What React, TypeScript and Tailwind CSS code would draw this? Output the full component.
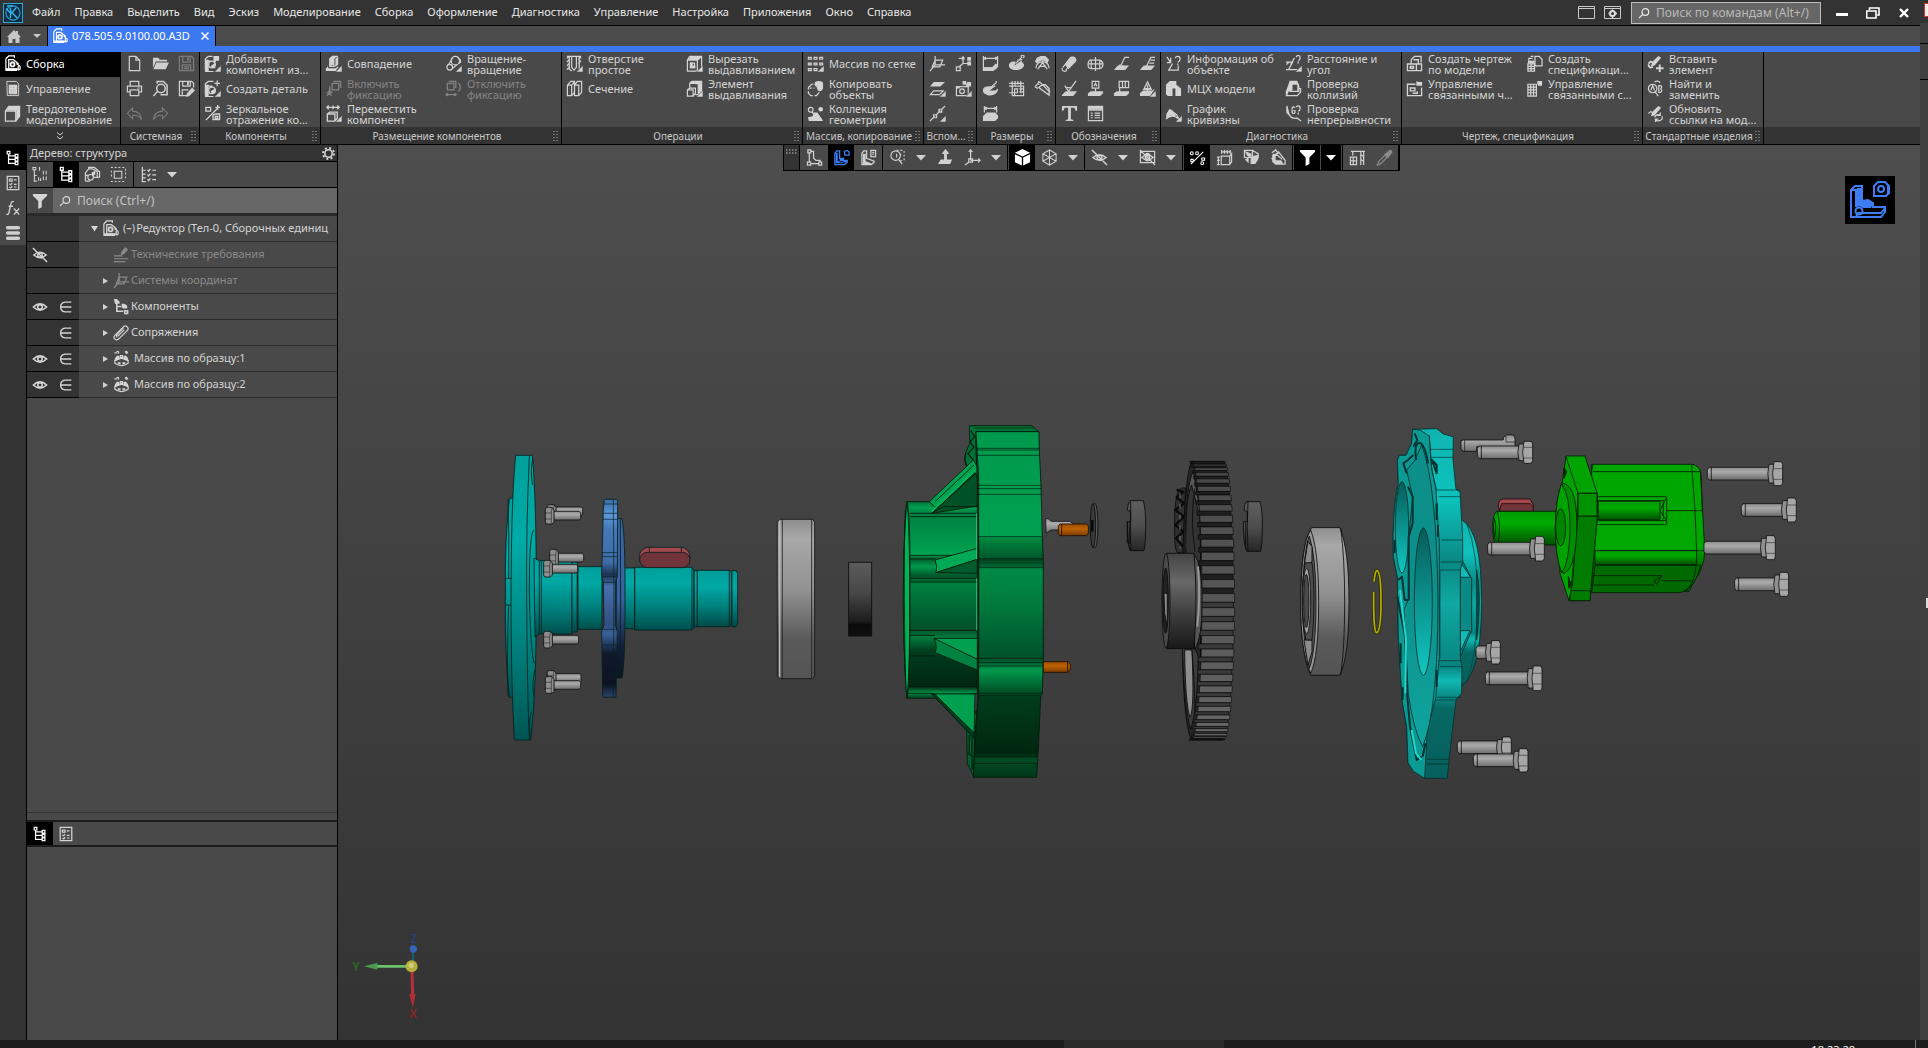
import React from "react";

type Glyph = { s?: string; f?: string; w?: number };

const tri = "M18 11V18H11Z";
const glyphs: Record<string, Glyph> = {
  assembly: { s: "M2 4L5 1H11V3M2 4V16H12M2 4V16M5 5H10L15 9V15H5ZM13 9L17 12V15L15 16", f: "M7 7H11V8H12V12H11V13H7V12H6V8H7ZM8 9V11H10V9ZM2 14H14V17H2Z" },
  sheet: { s: "M3 1.5H13L15.5 4V16.5H3.5ZM5 6.5H14M5 9.5H14M5 12.5H14M7.5 5V15M11 5V15", f: "M5 5H14V15H5Z M7 7V8H8V7ZM10 7V8H11V7ZM7 10V11H8V10ZM10 10V11H11V10ZM7 13V14H8V13ZM10 13V14H11V13Z", w: 1 },
  solid: { s: "M1.5 6.5H12.5V17H1.5ZM1.5 6.5L5 1.5H16.5V12L12.5 17M12.5 6.5L16.5 1.5", f: "M2 6L5 2H16L12.5 6.5V17H12L12 6ZM13 7L16.5 2.5V12L13 16.5Z" },
  doc: { s: "M3.5 1.5H10.5L14.5 5.5V16.5H3.5ZM10.5 1.5V5.5H14.5" },
  folder: { f: "M1 3H7L8 5H16V7H4L1 14ZM4.500 8H18L14.500 15H1.500Z" },
  save: { s: "M1.5 1.5H14.5L16.5 3.5V16.5H1.5ZM5 1.500V7.500H13V1.500M4.5 16.500V10.500H13.500V16.500M6 12.500H12M6 14.500H12", f: "M9.500 2.500H11.500V6H9.500Z" },
  print: { s: "M4.500 6V1.500H13.500V6M4 12.500H1.500V6.500H16.500V12.500H14M4.500 10.500H13.500V16.500H4.500Z", f: "M12 8H15V9H12Z" },
  preview: { s: "M5.500 4V1.500H12L16 5.500V15.500H9M14 9A4.500 4.500 0 1 1 5 9A4.500 4.500 0 1 1 14 9M6 12L1.500 17", w: 1.6 },
  saveEdit: { s: "M10 16.500H1.500V1.500H14.5L16.5 3.5V8M5 1.500V6.500H13V1.500M4.5 16V10.500H11", f: "M9.500 2H11.500V5.500H9.500ZM15 8L18 11L12 17L8.500 18L9.500 14Z" },
  undo: { s: "M7 3L1.500 9L7 14.500V11C12 10.500 14.500 12 16.500 15.500C16 10 13 7 7 6.500Z", w: 1.1 },
  redo: { s: "M11 3L16.500 9L11 14.500V11C6 10.500 3.500 12 1.500 15.500C2 10 5 7 11 6.500Z", w: 1.1 },
  addComp: { s: "M1.500 16V4L4.500 1.500H9M2 6.500H9M5 10A3.500 3.500 0 1 0 12 10A3.500 3.500 0 1 0 5 10", f: "M1 5H5V17H10V18H1ZM10 1H16V6H13L12 8H10ZM7 12L12 8V14H8Z" },
  newPart: { s: "M1.500 16V4L4.500 1.500H10M2 6.500H9M5 11A3.500 3.500 0 1 0 12 11A3.500 3.500 0 1 0 5 11M11 3.500H17M14 0.500V6.500", f: "M1 5H5V17H10V18H1ZM7 12L12 9V14H8Z" },
  mirror: { s: "M2 16L15 3M2 2.500H7V6.500H2ZM12 2.500H17M14.500 0V5M9.500 11L12 9.500H16.500V15.500H9.500ZM12 12H14.500V14H12Z", w: 1.4 },
  coincide: { s: "M5 12V4L8 1.500H13V10L10 12Z M3 12.500L1.500 15.500H11L14 12.500", f: "M8 1H13L10 4V11H5V4ZM1 14H12V17H1ZM11 4L14 2V10L11 12Z" },
  rotate: { s: "M6.500 6A4.500 4.500 0 1 1 15.500 6A4.500 4.500 0 1 1 6.500 6M2 13A3 3 0 1 1 8 13A3 3 0 1 1 2 13M4 10L8 3M8 14L13 10", f: "M13 2L17 5V8L14 10L15 6Z" },
  fixOn: { s: "M7.500 3.500H14.500V10.500H7.500ZM9 1.500H16.500V8.500M5 7V13M1.500 13.500H8.500M2 16.500L4.500 14L7 16.500M3 12H7" },
  fixOff: { s: "M2.500 3.500H9.500V10.500H2.500ZM4 1.500H11.500V8.500M14 3C17 6 17 10 14 12M3 14L1 15.500L3 17M10 14L12 15.500L10 17M2 15.500H11" },
  move: { s: "M2 2.500H15M4 0.500L2 2.500L4 4.500M13 0.500L15 2.500L13 4.500M8.500 0.500V4.500M2.500 9.500H10.500V17H2.500ZM2.500 9.500L5 7.500H13V14L10.500 17", w: 1.4 },
  hole: { s: "M6 1.500V13L8.500 16L11 13V1.500M3.500 1V15L6 17M14 1V15M1 3.500L4 1M1 7.500L4 4M1 11.500L4 8M1 15.500L4 12M13 5L16 2M13 9L16 6M1 1.500H16" },
  section: { s: "M1.500 5.500L5 1.500H9V13L6 16.500H1.500ZM9 5.500L12 1.500H16.500V13L13.500 16.500H9ZM1.500 5.500H6V16.500M6 5.500L9 2M9 5.500H13.500V16.500" },
  cut: { s: "M1.500 5.500H12V17H1.500ZM1.500 5.500L4 1.500H16.500V13M12 5.500L16 2M5 8.500H9V13.500H5Z", f: "M2 5L4.500 2H16L12.500 5.500ZM4 8H7V11H10V14H4Z" },
  extrude: { s: "M1.500 10.500H7.500V17H1.500ZM1.500 10.500L4 8.500H10V14L7.500 17M4 8.500V3.500L6 1.500H16.500V12L13 15.500H10M4 3.500H13V15", f: "M4 4L6 2H16L13 4.500ZM13 4L16.500 2V12L13 15Z" },
  grid: { s: "M1.500 2.500H4.500V4.500H1.500ZM7.500 2.500H10.500V4.500H7.500ZM13.500 2.500H16.500V4.500H13.500ZM1.500 8.500H4.500V10.500H1.500ZM7.500 8.500H10.500V10.500H7.500ZM13.500 8.500H16.500V10.500H13.500ZM1.500 14.500H4.500V16.500H1.500ZM7.500 14.500H10.500V16.500H7.500Z" },
  copyObj: { s: "M1.500 8L5 4.500H7M1.500 8V10M1.500 12V14L4 16.500H6M8 16.500H10L13 13M3 8.500H5M7 8.500H8", f: "M8 4A4.500 3 0 1 1 17 4V9C16 12 12 13 11 10L10 7C9 7 8 6 8 4Z" },
  collect: { s: "M1.500 5A2.500 2.500 0 1 1 6.500 5A2.500 2.500 0 1 1 1.500 5M5 7.500L9 11", f: "M12 4.500A2.500 2.500 0 1 1 17 4.500A2.500 2.500 0 1 1 12 4.500M7 8H11L16 15L17 17H2L1 13L6 12Z" },
  plane: { s: "M6.500 6V1M6.500 10.500L1 17M6.500 10.500H17M3.500 12.500L6.500 5.500H14.500L11.500 12.500ZM6.500 5.500V10.500" },
  axis: { s: "M8.500 1V9H17M8.500 9L4 13M1.500 12.500H5.500V16.500H1.500ZM7 3.500H4", f: "M7 2H10V5H7ZM13 2H17V6H13ZM13 7H17V11H13Z" },
  planes: { s: "M1.500 15.500L5 11.500H15L11 15.500Z", f: "M5 2H17L12 7H1Z" },
  body: { s: "M1.500 7H14V16.500H1.500ZM5 12A2.500 2.500 0 1 1 10 12A2.500 2.500 0 1 1 5 12", f: "M8 1H12V5H8ZM13 2H17V7H14L11 8ZM1 7H5V9H1Z" },
  line: { s: "M1 17L6 12M8 10L12 6M13 5L17 1M5 10.500H8V13.500H5ZM10.500 4.500H13.500V7.500H10.500Z" },
  dim1: { s: "M1.500 1V17M16.500 1V13M1.500 3.500H16.500M4 2L2 3.500L4 5M14 2L16 3.500L14 5M1.500 13.500H11L15 9.500", f: "M1 13H11L16 9V14L12 17H1Z" },
  dim2: { s: "M8 9L15 2M10 5.500L15 5M14 2A1.500 1.500 0 1 1 16 3", f: "M1 10C2 6 8 7 8 7L7 11L14 6L17 10C17 16 8 17 4 15C1 14 1 12 1 10Z" },
  dim3: { s: "M2 14A7 7 0 1 1 16 14M4 15L9 8L14 15M5 12H13", f: "M3 3L7 1H12L16 5L14 9L11 6H7L3 9L1 7Z" },
  dim4: { s: "M8 9L15 3V1M14 6L8 10", f: "M1 10C2 6 9 6 12 8L8 11H14L17 9C17 16 8 18 4 15C1 14 1 12 1 10Z" },
  dim5: { s: "M4.500 1V16M1 3.500H17M7.500 1V7M10.500 1V5M13.500 1V14M1 6.500H16.500V16.500H4M1 13.500H10V9.500H7V16M12 9.500H17M12 12.500H17" },
  dim6: { s: "M1 7L6 2M1 7L4 9M6 2L17 13M9 5H12L16 9V16L5 8ZM5 1V5", w: 1.4 },
  dim7: { s: "M2.500 1V8M15.500 1V8M2.500 3.500H15.500M5 2L3 3.500L5 5M13 2L15 3.500L13 5", f: "M1 16V12L5 8H14L17 11V14L14 17H1Z" },
  thread: { s: "M2 13L10 3M5 16L13 7M1.500 13.500A2.500 2.500 0 0 0 6 16", f: "M9 3C11 0 18 2 16 7L8 15L4 10ZM10 5L13 8ZM8 7L11 10Z" },
  center: { s: "M4.500 5.500H13.500V14.500H4.500ZM4.500 5C0 6 0 14 4.500 14.500M13.500 5.500C18 7 18 13 13.500 14.500M1 9.500H17M9 2V17" },
  leader: { s: "M17 2.500H12.500L8 12M7 10L8 13L11 11", f: "M1 16L5 11H17L13 16Z" },
  leader2: { s: "M17 2.500H12.500L8 12M12 5.500H17M11 8.500H16", f: "M1 16L5 11H17L13 16Z" },
  rough: { s: "M4 6L8 12L16 1M6 8H10", f: "M1 16L5 12H17L13 17H1Z" },
  datum: { s: "M5.500 1.500H12.500V8.500H5.500ZM9 8.500V13M7.500 6.500L9 3.500L10.500 6.500", f: "M1 17V14L4 12H17V14L14 17Z" },
  tol: { s: "M6.500 1.500H16.500V8H6.500ZM10 1.500V8M13 1.500V8M7 8V13", f: "M1 17V14L4 12H17V14L14 17Z" },
  brand: { s: "M9 2L13 10H5ZM9 5V14M6 9H12", f: "M1 17V14L4 11H14L17 9L12 17Z" },
  text: { f: "M1 1H17V6H15.500L14 3H10.500V15L13 16V17H5V16L7.500 15V3H4L2.500 6H1Z" },
  table: { s: "M1.500 1.500H16.500V16.500H1.500ZM1.500 5.500H16.500M4 8.500H6M8 8.500H14M4 11H6M8 11H14M4 13.500H6M8 13.500H14", f: "M2 2H16V5H2Z" },
  info: { s: "M2 2L6 8M6 3V8H2M8 9L4 16H14V11M11 3.500Q11 1.500 13.500 1.500T16 4T13.500 8M13.500 9V10.500" },
  mass: { f: "M1 5L5 1H12V5L17 9V17H11V9H8V17H3L1 15Z" },
  curve: { s: "M1 15C4 12 8 11 12 13L17 17M2 10V14M4 6V13M7 5V12M10 8V12M2 10L5 5L8 7L12 10L15 15", f: "M2 9L5 5L9 8L12 12L6 11L2 14Z" },
  dist: { s: "M1 15.500H13M1 7.500H8L4 15M6 10L10 3M1.500 10L5 7M12 2.500Q12 0.500 14 0.500T16 3T14 6M14 7V9" },
  collision: { s: "M5.500 1.500H12.500L14.500 6V12H5.500ZM1.500 12L5 9M1.500 12V16.500H13L16.500 13V9H14", f: "M5 1H12L15 6V12H13V5H8V11L4 12L2 17L1 12Z" },
  cont: { s: "M2 1L4 9Q6 15 13 14L17 17M2 1V8L6 12M10.500 3Q9 1 7.500 3V8Q9 10 10.500 8V6H9M12 2.500Q12 1 14 1T16 3.500T14 6.500M14 8V10" },
  drawing: { s: "M5.500 5L9 1.500H16V8M5.500 5V9M8 5H13V9M1.500 9.500H16.500V16.500H1.500ZM4.500 12H8V14H4.500ZM11 9.500V16", w: 1.4 },
  drawings: { s: "M10 4.500H1.500V16.500H16.500V8M4.500 8.500H9.500V11.500H4.500ZM12 12V14H7", f: "M11 1L13 2H17V6H11Z", w: 1.4 },
  spec: { s: "M2 9.500H9V17H2ZM2 12H9M2 14.500H9M5.500 9.500V17M3 6V3.500H7M5 1.500H8M9.500 1.500H14L17 4.500V11.500H9.500Z", f: "M2 6H9V9H2Z" },
  specs: { s: "M2 4.500H11V17H2ZM2 7.500H11M2 10.500H11M2 13.500H11M5 5V17M8 5V17", f: "M12 1H17V6H13L12 4Z" },
  insert: { s: "M1.500 9L4 7L8 9M13.500 10V18M9.500 14H17.500M2 10A2 2 0 1 0 6 12", f: "M6 7L12 1L15 3L8 11L4 12Z", w: 2 },
  replace: { s: "M1.500 9A4.500 4.500 0 1 1 10.500 9A4.500 4.500 0 1 1 1.500 9M9 13L12 17M4 11L6 6L8 11M12.500 6V13H14.500Q17 11 14.500 9.500Q16.500 7 14.500 6ZM8 2Q12 0 14 3" },
  refresh: { s: "M1.500 9L4 7L8 9M8 13Q10 9 14 11M16 12V15Q13 18 9 16M14 8V11H11M9 18V15H12", f: "M6 7L12 1L15 3L8 11L4 12Z" },
  tree: { s: "M2.500 1.500H5.500V4.500H2.500ZM4 4.500V15H11M4 6.500H11M4 10.500H11M11.500 5H14.500V8H11.500ZM11.500 9.500H14.500V12.500H11.500ZM11.500 13.500H14.500V16.500H11.500Z", w: 1.4 },
  params: { s: "M2.500 1.500H15.500V16.500H2.500ZM5 4.500H8V7H5ZM10 5.500H13M5 10L6.500 11L8 9M10 10.500H13M5 13.500L6.500 14.500L8 12.500M10 13.500H13", w: 1.4 },
  fx: { s: "M10 2Q7.500 0.500 6.500 5L4.500 14Q4 17 1.500 16M4 7H9M10 9.500L16 16.500M16 9.500L10 16.500", w: 1.5 },
  layers: { f: "M3 1H15Q17 1 17 3T15 5H3Q1 5 1 3T3 1ZM3 7H15Q17 7 17 9T15 11H3Q1 11 1 9T3 7ZM3 13H15Q17 13 17 15T15 17H3Q1 17 1 15T3 13Z" },
  numTree: { s: "M1 1.500H4V4H1ZM2.500 4V16H5M2.500 10H5M8 1V5M12 5V9M15 5V9M7 12V16M12 11V15M15 11V15M9 13V16", w: 1.1 },
  parts: { s: "M1.500 16V7L5 3H9L14 6V12M5 3V1.500H11L16.500 6V12M4 12A3 3 0 1 1 10 12A3 3 0 1 1 4 12M1.500 10H4M1.500 16H6M10 12H16.500", f: "M8 7L12 5V9L9 11Z" },
  area: { s: "M1 1.500H3M5 1.500H7M9 1.500H11M13 1.500H15M1 16.500H3M5 16.500H7M9 16.500H11M13 16.500H15M16.500 3V5M16.500 7V9M16.500 11V13M4.500 5.500H12.500V13H4.500ZM1.500 5V7M1.500 9V11", w: 1.1 },
  checks: { s: "M2.500 1V16.500H6M2.500 4.500H6M2.500 8.500H6M2.500 12.500H6M8 4L9 5.500L11 3M8 9L9 10.500L11 8M8 14L9 15.500L11 13M13 4.500H17M13 9.500H17M13 14.500H17" },
  funnel: { f: "M1 1H17V3L11 9V16L7 18V9L1 3Z" },
  search: { s: "M6 7.500A5 5 0 1 1 16 7.500A5 5 0 1 1 6 7.500M7 11L1.500 16.500", w: 1.8 },
  eye: { s: "M1.500 9Q9 2 16.500 9Q9 16 1.500 9ZM6.500 9A2.500 2.500 0 1 1 11.500 9A2.500 2.500 0 1 1 6.500 9", w: 1.8 },
  eyeOff: { s: "M2 9Q9 3 16 9Q9 15 2 9ZM6.500 9A2.500 2.500 0 1 1 11.500 9A2.500 2.500 0 1 1 6.500 9M1 1L17 17", w: 1.6 },
  elem: { s: "M15 3.500H8Q3 4 3 9T8 14.500H15M3 9H15", w: 1.6 },
  req: { s: "M1 10.500H10M1 13.500H16M1 16.500H13M9 8L14 3", f: "M13 1L16 4L11 9L8 9.500L9 6Z" },
  comps: { s: "M4 5V14H11M4 9H9M12.500 13.500H15.500V16.500H12.500Z", f: "M1 1H4L7 4V6H2ZM9 6H12L15 8V11H10Z", w: 1.6 },
  clip: { s: "M2 12L11 3Q13 1 15 3T15 7L7 15Q4 18 2 16T2 12M5 13L12 6M4 14Q3 12 5 10L11 4" },
  pattern: { s: "M2 11Q9 7 16 11V14Q9 19 2 14ZM4 2.500A1 1 0 1 1 5 3.500M13 2.500A1 1 0 1 1 14 3.500M1.500 3H4M13 3H16M8 6H10V8H8Z", f: "M4 6H7V10L2 12V9ZM11 6H14L16 9V12L11 10ZM5 13H8V15H5ZM10 13H13V15H10Z" },
  sketch: { s: "M3.500 4V14M5 2.500H8V9.500L10.500 12H15V14M5 15.500H13.500M2 1H5V4H2ZM1.500 14H5V17H1.500ZM13.500 14H16.500V17H13.500Z" },
  partView: { s: "M2 4.500L4 2H7V10H11V12H15V14L12 16.500H2ZM12 2.500L15 1.500L17 3V6.500H12.500Z", f: "M3 4H5V13H11V15H3ZM7 10H10L12 12H15V14H7Z", w: 1.4 },
  docView: { s: "M2 4.500L4 2H7V10L15 13V14L12 16.500H2ZM11.500 1.500H16.500V8H11.500ZM13 3.500H15M13 5.500H15", f: "M3 5H6V13L12 15V16H3Z" },
  zoomArea: { s: "M2 7A5 5 0 1 1 12 7A5 5 0 1 1 2 7M10 11L14 16M8 1.500H10M12 1.500H14M16 2V4M16 6V8M16 10V12M12 12.500H14M8 5V9M11 6H13", w: 1.2 },
  normal: { s: "M9 3V12M6 5L9 2L12 5", f: "M9 0L13 5H10.500V11H16L14 16H1L4 11H7.500V5H5Z" },
  orient: { s: "M7 1V12M5 3L7 1L9 3M7 12H17M15 10L17 12L15 14M5 14L1 17M5 10.500H9V14H5Z" },
  shade: { f: "M9 0L17 4L9 8L1 4ZM1 5.500L8.300 9V17.500L1 14ZM17 5.500L9.700 9V17.500L17 14Z" },
  wire: { s: "M9 1L16 5V13L9 17L2 13V5ZM2 5L9 9L16 5M9 9V17M9 1V9L2 13M9 9L16 13", w: 1.1 },
  camEye: { s: "M1.500 2.500H16.500V14.500H1.500ZM3 9Q9 3 15 9Q9 14 3 9ZM1 1L17 17", f: "M6 7A3 3 0 0 1 12 7V10A3 3 0 0 1 6 10ZM8 8V10H10V8Z" },
  constraint: { s: "M2 16L15 3M1.500 4.500A1.500 1.500 0 1 1 4.500 4.500A1.500 1.500 0 1 1 1.500 4.500M7 4.500A1.500 1.500 0 1 1 10 4.500A1.500 1.500 0 1 1 7 4.500M13.500 9.500H16.500V12H13.500ZM12.500 15A1.500 1.500 0 1 1 15.500 15A1.500 1.500 0 1 1 12.500 15M2 11H4.500V13.500H2Z", w: 1.1 },
  dimBox: { s: "M5.500 7.500H14.500V16.500H5.500ZM6 1V5M9 1V5M12 1V5M15 1V5M6 3H16M1 8.500H4M1 12H4M1 16.500H4M2.500 8V17M14.500 7.500L16.500 5V14L14.500 16" },
  boxCut: { s: "M1.500 1.500H10V9H1.500ZM10 1.500L16 5V10", f: "M2 2L9 5V10L4 7ZM8 8L16 6V11L13 16H8ZM2 11L6 9V15Z" },
  hatch: { s: "M2 4L6 1L9 5M6 5L13 11M9 3L16 12V16H6L2 10ZM3 6V14", f: "M3 5H6V12H12L14 16H5L3 14Z" },
  crane: { s: "M2 2.500H17M4 2V7M12.500 3V17M15.500 3V17M12.500 6L15.500 8M12.500 11L15.500 13M1.500 8.500H8V16.500H1.500ZM1.500 12.500H8M4.500 8.500V16.500" },
  dropper: { s: "M10 6L3 13L1.500 17L5 15.500L12 8.500", f: "M9 5L11 4L14 1Q17 0 17.500 3.500L14 8L13 10L9 7Z" },
};

function Icon({ n, fly, className = "size-[17px]" }: { n: string; fly?: boolean; className?: string }) {
  const g = glyphs[n];
  return (
    <svg viewBox="0 0 18 18" className={`${className} shrink-0`} aria-hidden="true">
      {g.f && <path d={g.f} fill="currentColor" fillRule="evenodd" />}
      {g.s && <path d={g.s} fill="none" stroke="currentColor" strokeWidth={g.w ?? 1.3} />}
      {fly && <path d={tri} fill="currentColor" stroke="#494949" strokeWidth="0.6" />}
    </svg>
  );
}

const Caret = () => (
  <svg viewBox="0 0 10 6" className="h-1.5 w-2.5 shrink-0" aria-hidden="true">
    <path d="M0 0H10L5 5.500Z" fill="currentColor" />
  </svg>
);

const Gear = ({ className }: { className: string }) => (
  <svg viewBox="0 0 14 14" className={className} aria-hidden="true">
    <circle cx="7" cy="7" r="4" fill="none" stroke="currentColor" strokeWidth="1.800" />
    <circle cx="7" cy="7" r="6" fill="none" stroke="currentColor" strokeWidth="2" strokeDasharray="2.200 2.512" />
  </svg>
);

type Tool = { n: string; t: string[]; fly?: boolean; off?: boolean };

function Caption({ lines }: { lines: string[] }) {
  return (
    <span className="whitespace-nowrap text-[11px] leading-[11px]">
      {lines.map((l) => (
        <span key={l} className="block">{l}</span>
      ))}
    </span>
  );
}

function ToolButton({ n, t, fly, off }: Tool) {
  return (
    <button disabled={off} className={`flex min-w-0 items-center gap-[5px] pb-0.5 pl-1 text-left ${off ? "text-[#858585]" : "text-[#d4d4d4]"}`}>
      <Icon n={n} fly={fly} />
      <Caption lines={t} />
    </button>
  );
}

function Section({ label, width, children }: { label: string; width: string; children: React.ReactNode }) {
  return (
    <section className={`flex shrink-0 flex-col border-r border-black ${width}`}>
      {children}
      <div className="flex h-[17px] items-center bg-[#333] pr-[3px]">
        <h2 className="min-w-0 grow whitespace-nowrap text-center text-[10px] leading-4 text-[#c8c8c8]">{label}</h2>
        <svg viewBox="0 0 5 10" className="h-2.5 w-[5px] shrink-0 text-[#b0b0b0]" aria-hidden="true">
          <path d="M1 0V10M4 0V10" stroke="currentColor" strokeWidth="1" strokeDasharray="1 2" />
        </svg>
      </div>
    </section>
  );
}

function TextTools({ items, cols }: { items: Tool[]; cols: string }) {
  return <div className={`grid h-[75px] grid-rows-3 ${cols}`}>{items.map((i) => <ToolButton key={i.t.join()} {...i} />)}</div>;
}

function IconTools({ items, cols, dim = [], fly = [] }: { items: string[]; cols: string; dim?: string[]; fly?: string[] }) {
  return (
    <div className={`grid h-[75px] grid-rows-3 ${cols}`}>
      {items.map((n) => (
        <button key={n} aria-label={n} className={`flex items-center justify-center pb-0.5 ${dim.includes(n) ? "text-[#7c7c7c]" : "text-[#cfcfcf]"}`}>
          <Icon n={n} fly={fly.includes(n)} />
        </button>
      ))}
    </div>
  );
}

const menu = ["Файл", "Правка", "Выделить", "Вид", "Эскиз", "Моделирование", "Сборка", "Оформление", "Диагностика", "Управление", "Настройка", "Приложения", "Окно", "Справка"];

function TitleBar() {
  return (
    <header className="flex h-[26px] items-center border-b border-black bg-[#333] pl-[3px] text-[#e8e8e8]">
      <svg viewBox="0 0 20 20" className="size-5 shrink-0" aria-hidden="true">
        <rect x="0.500" y="0.500" width="19" height="19" fill="#0d2c3d" stroke="#2ba5dc" />
        <circle cx="10" cy="10" r="7" fill="none" stroke="#2493c8" strokeWidth="1.300" />
        <path d="M7.500 5V15M8 10.500L13 5M9 9.500L14 15M3 5.500L7 9.500M4 3L10 3" fill="none" stroke="#35b3ea" strokeWidth="1.500" />
      </svg>
      <nav className="ml-[9px] flex gap-3.5 text-[11px]">
        {menu.map((m) => (
          <button key={m} className="whitespace-nowrap">{m}</button>
        ))}
      </nav>
      <div className="ml-auto flex items-center pr-[11px]">
        <button aria-label="Окно"><svg viewBox="0 0 17 13" className="h-[13px] w-[17px]"><path d="M.5 .5H16.500V12.500H.5ZM1 2.500H16" fill="none" stroke="#c9c9c9" /></svg></button>
        <button aria-label="Настройка экрана" className="ml-[9px]">
          <svg viewBox="0 0 17 13" className="h-[13px] w-[17px]"><path d="M.5 .5H16.500V12.500H.5ZM1 2.500H16" fill="none" stroke="#c9c9c9" /><circle cx="8.500" cy="7.500" r="2.500" fill="none" stroke="#ddd" strokeWidth="2" /><path d="M8.500 3.500V5M8.500 10V12M4.500 7.500H6M11 7.500H13" stroke="#ddd" strokeWidth="1.500" /></svg>
        </button>
        <label className="ml-2.5 flex h-[22px] w-[190px] items-center gap-1.5 border border-[#bdbdbd] bg-[#666] pl-1.5">
          <Icon n="search" className="size-3" />
          <input aria-label="Поиск по командам" placeholder="Поиск по командам (Alt+/)" className="w-full min-w-0 bg-transparent text-xs text-white outline-none placeholder:text-[#bababa]" />
        </label>
        <button aria-label="Свернуть" className="ml-[15px] mt-1 h-[3px] w-3 bg-white" />
        <button aria-label="Восстановить" className="ml-[18px]"><svg viewBox="0 0 14 12" className="h-3 w-3.5"><path d="M3.500 3V1H13V8H11M.7 4H10V11H.7Z" fill="none" stroke="#fff" strokeWidth="1.600" /></svg></button>
        <button aria-label="Закрыть" className="ml-[19px]"><svg viewBox="0 0 10 10" className="size-2.5"><path d="M1 1L9 9M9 1L1 9" stroke="#fff" strokeWidth="2.400" /></svg></button>
      </div>
    </header>
  );
}

function TabRow() {
  return (
    <div>
      <div className="flex h-5 bg-[#4b4b4b]">
        <button aria-label="Главная" className="flex w-12 items-center justify-between border-x border-black px-1.5 text-[#c8c8c8]">
          <svg viewBox="0 0 14 13" className="h-[13px] w-3.5"><path d="M7 0L9 2V1H11V4L14 7H12.500V13H8.500V9H5.500V13H1.500V7H0Z" fill="currentColor" /></svg>
          <svg viewBox="0 0 8 4" className="h-1 w-2"><path d="M0 0H8L4 4Z" fill="currentColor" /></svg>
        </button>
        <div className="flex w-[168px] items-center border-r border-black bg-[#3c78f0] pl-1 text-white">
          <Icon n="assembly" className="size-4" />
          <button className="ml-1 text-[11px]">078.505.9.0100.00.A3D</button>
          <button aria-label="Закрыть вкладку" className="ml-auto mr-1.5"><svg viewBox="0 0 8 8" className="size-2"><path d="M.5 .5L7.500 7.500M7.500 .5L.5 7.500" stroke="#fff" strokeWidth="1.500" /></svg></button>
        </div>
      </div>
      <div className="h-1.5 bg-[#3c78f0]" />
    </div>
  );
}

const modes = [
  { n: "assembly", t: ["Сборка"] },
  { n: "sheet", t: ["Управление"] },
  { n: "solid", t: ["Твердотельное", "моделирование"] },
];

function Ribbon() {
  return (
    <div className="flex border-b border-black bg-[#494949]">
      <div className="flex w-[121px] shrink-0 flex-col border-r border-black">
        <div className="grid h-[75px] grid-rows-3">
          {modes.map(({ n, t }, i) => (
            <button key={n} className={`flex items-center gap-[5px] pb-0.5 pl-1 text-left ${i === 0 ? "bg-black text-white" : "text-[#d4d4d4]"}`}>
              <Icon n={n} />
              <Caption lines={t} />
            </button>
          ))}
        </div>
        <button aria-label="Ещё" className="flex h-[17px] items-center justify-center bg-[#333] text-[#d4d4d4]">
          <svg viewBox="0 0 8 8" className="size-2"><path d="M1 .5L4 3L7 .5M1 4.500L4 7L7 4.500" fill="none" stroke="currentColor" /></svg>
        </button>
      </div>
      <Section label="Системная" width="w-[79px]">
        <IconTools cols="grid-cols-3" items={["doc", "folder", "save", "print", "preview", "saveEdit", "undo", "redo"]} dim={["save", "undo", "redo"]} />
      </Section>
      <Section label="Компоненты" width="w-[121px]">
        <TextTools cols="grid-cols-1" items={[
          { n: "addComp", t: ["Добавить", "компонент из..."], fly: true },
          { n: "newPart", t: ["Создать деталь"], fly: true },
          { n: "mirror", t: ["Зеркальное", "отражение ко..."] },
        ]} />
      </Section>
      <Section label="Размещение компонентов" width="w-[241px]">
        <TextTools cols="grid-cols-2" items={[
          { n: "coincide", t: ["Совпадение"], fly: true },
          { n: "rotate", t: ["Вращение-", "вращение"], fly: true },
          { n: "fixOn", t: ["Включить", "фиксацию"], off: true },
          { n: "fixOff", t: ["Отключить", "фиксацию"], off: true },
          { n: "move", t: ["Переместить", "компонент"], fly: true },
        ]} />
      </Section>
      <Section label="Операции" width="w-[241px]">
        <TextTools cols="grid-cols-2" items={[
          { n: "hole", t: ["Отверстие", "простое"], fly: true },
          { n: "cut", t: ["Вырезать", "выдавливанием"], fly: true },
          { n: "section", t: ["Сечение"] },
          { n: "extrude", t: ["Элемент", "выдавливания"], fly: true },
        ]} />
      </Section>
      <Section label="Массив, копирование" width="w-[121px]">
        <TextTools cols="grid-cols-1" items={[
          { n: "grid", t: ["Массив по сетке"], fly: true },
          { n: "copyObj", t: ["Копировать", "объекты"] },
          { n: "collect", t: ["Коллекция", "геометрии"] },
        ]} />
      </Section>
      <Section label="Вспом..." width="w-[53px]">
        <IconTools cols="grid-cols-2" items={["plane", "axis", "planes", "body", "line"]} fly={["planes", "body", "line"]} />
      </Section>
      <Section label="Размеры" width="w-[79px]">
        <IconTools cols="grid-cols-3" items={["dim1", "dim2", "dim3", "dim4", "dim5", "dim6", "dim7"]} />
      </Section>
      <Section label="Обозначения" width="w-[105px]">
        <IconTools cols="grid-cols-4" items={["thread", "center", "leader", "leader2", "rough", "datum", "tol", "brand", "text", "table"]} fly={["brand"]} />
      </Section>
      <Section label="Диагностика" width="w-[241px]">
        <TextTools cols="grid-cols-2" items={[
          { n: "info", t: ["Информация об", "объекте"] },
          { n: "dist", t: ["Расстояние и", "угол"], fly: true },
          { n: "mass", t: ["МЦХ модели"] },
          { n: "collision", t: ["Проверка", "коллизий"] },
          { n: "curve", t: ["График", "кривизны"], fly: true },
          { n: "cont", t: ["Проверка", "непрерывности"] },
        ]} />
      </Section>
      <Section label="Чертеж, спецификация" width="w-[241px]">
        <TextTools cols="grid-cols-2" items={[
          { n: "drawing", t: ["Создать чертеж", "по модели"] },
          { n: "spec", t: ["Создать", "спецификаци..."] },
          { n: "drawings", t: ["Управление", "связанными ч..."] },
          { n: "specs", t: ["Управление", "связанными с..."] },
        ]} />
      </Section>
      <Section label="Стандартные изделия" width="w-[121px]">
        <TextTools cols="grid-cols-1" items={[
          { n: "insert", t: ["Вставить", "элемент"] },
          { n: "replace", t: ["Найти и", "заменить"] },
          { n: "refresh", t: ["Обновить", "ссылки на мод..."] },
        ]} />
      </Section>
      <div className="flex grow flex-col justify-end"><div className="h-[17px] bg-[#333]" /></div>
    </div>
  );
}

function SideStrip() {
  return (
    <div className="w-[26px] shrink-0 bg-[#333]">
      {["tree", "params", "fx", "layers"].map((n, i) => (
        <button key={n} aria-label={n} className={`flex h-[25px] w-[26px] items-center justify-center ${i === 0 ? "bg-black text-white" : "bg-[#494949] text-[#d0d0d0]"}`}>
          <Icon n={n} className="size-4" />
        </button>
      ))}
    </div>
  );
}

const rows = [
  { n: "req", t: "Технические требования", vis: "eyeOff", arrow: false, dim: true },
  { n: "plane", t: "Системы координат", arrow: true, dim: true },
  { n: "comps", t: "Компоненты", vis: "eye", el: true, arrow: true },
  { n: "clip", t: "Сопряжения", el: true, arrow: true },
  { n: "pattern", t: "Массив по образцу:1", vis: "eye", el: true, arrow: true, wide: true },
  { n: "pattern", t: "Массив по образцу:2", vis: "eye", el: true, arrow: true, wide: true },
];

function TreePanel() {
  return (
    <aside className="flex w-[312px] shrink-0 flex-col border-x border-black bg-[#494949] text-[#d4d4d4]">
      <div className="flex h-[17px] items-center justify-between border-b border-black bg-[#333] pl-[3px] pr-0.5 text-[11px] leading-4">
        <h2>Дерево: структура</h2>
        <button aria-label="Настройки"><Gear className="size-[13px]" /></button>
      </div>
      <div className="flex h-[26px] items-stretch border-b border-black">
        {["numTree", "tree", "parts", "area"].map((n, i) => (
          <button key={n} aria-label={n} className={`flex w-[26px] items-center justify-center ${i === 1 ? "bg-black text-white" : ""}`}><Icon n={n} className="size-[17px]" /></button>
        ))}
        <div className="ml-0.5 w-px bg-black" />
        <button aria-label="Список" className="flex items-center gap-2.5 pl-1.5"><Icon n="checks" className="size-[17px]" /><Caret /></button>
      </div>
      <div className="flex h-7 border-b-[3px] border-[#2a2a2a]">
        <button aria-label="Фильтр" className="flex w-[26px] items-center justify-center"><Icon n="funnel" className="size-4" /></button>
        <label className="flex grow items-center gap-1.5 bg-[#676767] pl-1.5">
          <Icon n="search" className="size-3" />
          <input aria-label="Поиск" placeholder="Поиск (Ctrl+/)" className="w-full min-w-0 bg-transparent text-xs outline-none placeholder:text-[#c2c2c2]" />
        </label>
      </div>
      <ul className="grow text-[11px]">
        <li className="flex h-[26px] items-stretch overflow-hidden">
          <span className="w-[52px] shrink-0 border-b border-black bg-[#333]" />
          <span className="flex grow items-center whitespace-nowrap border-b border-[#2c2c2c] pl-3">
            <svg viewBox="0 0 7 7" className="size-[7px] shrink-0"><path d="M0 1H7L3.500 6.500Z" fill="currentColor" /></svg>
            <span className="ml-1 flex"><Icon n="assembly" className="size-[17px]" /></span>
            <span className="ml-1 mr-px">(<b>–</b>)</span>
            <span>Редуктор (Тел-0, Сборочных единиц</span>
          </span>
        </li>
        {rows.map((r) => (
          <li key={r.t} className="flex h-[26px] items-stretch">
            <span className="flex w-[52px] shrink-0 items-center border-b border-black bg-[#333]">
              <span className="flex w-[26px] justify-center">{r.vis && <Icon n={r.vis} className="size-4" />}</span>
              <span className="flex w-[26px] justify-center">{r.el && <Icon n="elem" className="size-4" />}</span>
            </span>
            <span className={`flex grow items-center whitespace-nowrap border-b border-[#2c2c2c] pl-[23px] ${r.dim ? "text-[#8a8a8a]" : ""}`}>
              <svg viewBox="0 0 6 6" className="size-1.5 shrink-0 text-[#d0d0d0]">{r.arrow && <path d="M1 0L6 3L1 6Z" fill="currentColor" />}</svg>
              <span className="ml-[5px] flex"><Icon n={r.n} /></span>
              <span className={r.wide ? "ml-1" : "ml-px"}>{r.t}</span>
            </span>
          </li>
        ))}
      </ul>
      <div className="mb-[7px] h-px bg-[#333]" />
      <div className="flex h-[27px] items-start border-b-2 border-t-2 border-[#1c1c1c]">
        {["tree", "params"].map((n, i) => (
          <button key={n} aria-label={n} className={`flex h-[23px] w-[26px] items-center justify-center ${i === 0 ? "bg-black text-white" : ""}`}><Icon n={n} className="size-4" /></button>
        ))}
      </div>
      <div className="h-[193px] shrink-0" />
    </aside>
  );
}

const groups: { n: string; on?: string }[][] = [
  [{ n: "sketch" }, { n: "partView", on: "text-[#3f7df5] bg-black" }, { n: "docView" }],
  [{ n: "zoomArea" }, { n: "v" }, { n: "normal" }, { n: "orient" }, { n: "v" }],
  [{ n: "shade", on: "bg-black text-white" }, { n: "wire" }, { n: "v" }],
  [{ n: "eyeOff" }, { n: "v" }, { n: "camEye" }, { n: "v" }],
  [{ n: "constraint", on: "bg-black text-white" }, { n: "dimBox" }, { n: "boxCut" }, { n: "hatch" }],
  [{ n: "funnel", on: "bg-black text-white" }, { n: "v", on: "bg-black text-white" }],
  [{ n: "crane" }, { n: "dropper", on: "text-[#8a8a8a]" }],
];

function ViewToolbar() {
  return (
    <div className="relative ml-[445px] flex h-[26px] w-max border-x border-b border-black bg-[#494949] text-[#d0d0d0]">
      <div className="w-4 border-r border-black bg-[#333] px-0.5 pt-1">
        <svg viewBox="0 0 12 6" className="h-1.5 w-3"><path d="M0 1H12M0 4H12" stroke="#bbb" strokeDasharray="1.500 1.500" /></svg>
      </div>
      {groups.map((g, i) => (
        <div key={i} className="ml-px flex gap-px border-r border-black pr-px">
          {g.map((b, j) =>
            b.n === "v" ? (
              <button key={j} aria-label="Список" className={`flex w-5 items-center justify-center ${b.on ?? ""}`}><Caret /></button>
            ) : (
              <button key={j} aria-label={b.n} className={`flex w-[26px] items-center justify-center ${b.on ?? ""}`}><Icon n={b.n} /></button>
            )
          )}
        </div>
      ))}
    </div>
  );
}

/* Hex bolt with its head on the right: shank starts at x, head occupies [head, head + 36]. */
function BoltR({ x, y, head, h = 74, end = true }: { x: number; y: number; head: number; h?: number; end?: boolean }) {
  return (
    <g stroke="#111" strokeWidth="2.500" strokeLinejoin="round">
      <path d={`M${x + 5} ${y - 19}H${head}V${y + 19}H${x + 5}L${x} ${y + 12}V${y - 12}Z`} fill="url(#steel)" />
      {end && <path d={`M${x + 12} ${y - 19}V${y + 19}`} />}
      <path d={`M${head - 5} ${y - h / 2 + 8}Q${head - 12} ${y} ${head - 5} ${y + h / 2 - 8}H${head + 10}V${y - h / 2 + 8}Z`} fill="#909090" />
      <path d={`M${head + 10} ${y - h / 2}H${head + 32}L${head + 36} ${y - h / 2 + 8}V${y + h / 2 - 8}L${head + 32} ${y + h / 2}H${head + 10}Q${head + 2} ${y} ${head + 10} ${y - h / 2}Z`} fill="#a6a6a6" />
      <path d={`M${head + 8} ${y - 15}H${head + 35}M${head + 8} ${y + 17}H${head + 35}`} fill="none" strokeWidth="1.500" />
    </g>
  );
}

/* Hex bolt with its head on the left. */
function BoltL({ x, y, len, h = 50 }: { x: number; y: number; len: number; h?: number }) {
  return (
    <g stroke="#111" strokeWidth="2.500" strokeLinejoin="round">
      <path d={`M${x + 25} ${y - 13}H${x + len - 4}L${x + len} ${y - 8}V${y + 8}L${x + len - 4} ${y + 13}H${x + 25}Z`} fill="url(#steel)" />
      <path d={`M${x} ${y - h / 2 + 6}L${x + 3} ${y - h / 2}H${x + 20}L${x + 26} ${y - h / 2 + 8}V${y + h / 2 - 6}L${x + 20} ${y + h / 2}H${x + 3}L${x} ${y + h / 2 - 6}Z`} fill="#8e8e8e" />
      <path d={`M${x} ${y - 8}H${x + 18}L${x + 20} ${y - h / 2}M${x + 18} ${y - 8}V${y + h / 2}M${x} ${y + 10}H${x + 18}`} fill="none" strokeWidth="1.500" />
    </g>
  );
}

function Gradient({ id, stops }: { id: string; stops: [number, string][] }) {
  return (
    <linearGradient id={id} x1="0" y1="0" x2="0" y2="1">
      {stops.map(([o, c]) => <stop key={o} offset={o} stopColor={c} />)}
    </linearGradient>
  );
}

const teeth = Array.from({ length: 31 }, (_, i) => {
  const a = (t: number) => -Math.PI / 2 + (Math.PI * t) / 31;
  const edge = (t: number) => ({ y: 572 + 418 * Math.sin(a(t)), l: 966 - 32 * (1 - Math.cos(a(t))), r: 1064 - 32 * (1 - Math.cos(a(t))) });
  return { p: edge(i), q: edge(i + 0.62), n: edge(i + 1), lit: 66 + Math.round(42 * (i / 31)) };
});

function Model() {
  return (
    <svg viewBox="338 145 1582 895" className="absolute inset-0 h-full w-full" role="img" aria-label="Редуктор">
      <defs>
        <Gradient id="steel" stops={[[0, "#8c8c8c"], [0.35, "#ababab"], [1, "#6c6c6c"]]} />
        <Gradient id="teal" stops={[[0, "#00a09c"], [0.3, "#00aaa6"], [0.6, "#008985"], [1, "#005553"]]} />
        <Gradient id="shaft" stops={[[0, "#009c98"], [0.3, "#00a8a4"], [0.65, "#007f7b"], [1, "#004a48"]]} />
        <Gradient id="blue" stops={[[0, "#3c6eaa"], [0.08, "#5c98d8"], [0.15, "#4478b4"], [0.32, "#3e6ca8"], [0.38, "#1d3350"], [0.44, "#4770ae"], [0.63, "#334e80"], [0.68, "#3a6098"], [0.78, "#10192c"], [0.93, "#0d1322"], [1, "#28446a"]]} />
        <Gradient id="blue2" stops={[[0, "#3a66a2"], [0.5, "#3a62a0"], [0.8, "#141f38"], [1, "#0d1322"]]} />
        <Gradient id="ring" stops={[[0, "#8e8e8e"], [0.12, "#a8a8a8"], [0.45, "#919191"], [0.75, "#5a5a5a"], [1, "#545454"]]} />
        <Gradient id="dark" stops={[[0, "#5c5c5c"], [0.4, "#484848"], [0.8, "#1c1c1c"], [0.85, "#0b0b0b"], [1, "#101010"]]} />
        <Gradient id="washer" stops={[[0, "#5e5e5e"], [0.5, "#4e4e4e"], [1, "#262626"]]} />
        <Gradient id="g1" stops={[[0, "#009a4c"], [0.3, "#009f50"], [0.31, "#00873f"], [0.38, "#004c24"], [0.4, "#008b45"], [0.5, "#007a3c"], [0.66, "#00502a"], [0.69, "#00994c"], [0.74, "#00602e"], [0.77, "#003c1c"], [0.93, "#00260f"], [0.95, "#004d25"], [1, "#003519"]]} />
        <Gradient id="g2" stops={[[0, "#006f35"], [0.03, "#00a050"], [0.06, "#008040"], [0.27, "#00a250"], [0.29, "#005d2c"], [0.33, "#009a4c"], [0.38, "#005428"], [0.42, "#00803f"], [0.65, "#00502a"], [0.69, "#007c3c"], [0.76, "#003c1e"], [0.94, "#002611"], [0.97, "#008b45"], [1, "#004020"]]} />
        <Gradient id="hub" stops={[[0, "#444"], [0.3, "#686868"], [0.65, "#3c3c3c"], [1, "#181818"]]} />
        <Gradient id="cy" stops={[[0, "#0fb5b0"], [0.2, "#0dc2bc"], [0.38, "#0a8884"], [0.5, "#0fa8a2"], [0.68, "#078480"], [0.72, "#0fbab4"], [0.8, "#076864"], [1, "#07605d"]]} />
        <Gradient id="face" stops={[[0, "#0d8e89"], [0.5, "#0c908b"], [1, "#0fa59f"]]} />
        <Gradient id="bore" stops={[[0, "#075c59"], [0.4, "#0a8884"], [1, "#10c8c2"]]} />
        <Gradient id="lime" stops={[[0, "#00a600"], [0.65, "#00a800"], [0.78, "#007600"], [1, "#005a00"]]} />
        <Gradient id="limeShaft" stops={[[0, "#009a00"], [0.35, "#00ac00"], [1, "#004f00"]]} />
        <Gradient id="pin" stops={[[0, "#9a4c00"], [0.4, "#bd6200"], [1, "#7a3c00"]]} />
      </defs>

      <g transform="translate(490 430) scale(.3333)" stroke="#04201f" strokeWidth="2.500" strokeLinejoin="round">
        <path d="M58 205Q44 330 46 500Q44 680 58 802H72V205Z" fill="url(#teal)" />
        <path d="M47 445H66M47 525H66M54 206Q58 330 56 445M54 800Q50 700 56 525" fill="none" />
        <path d="M77 76H127Q139 200 139 500Q139 800 122 930H73Q63 750 63 500Q64 200 77 76Z" fill="url(#teal)" />
        <path d="M118 78Q108 300 110 500Q112 800 118 928M133 300Q118 300 118 480Q120 640 132 700M128 90Q120 120 128 165M124 845Q114 880 122 925M135 720Q124 760 132 800" fill="none" />
        <path d="M132 384L148 392H246V612H148L135 622Z" fill="url(#shaft)" />
        <path d="M246 396H262V606H246ZM262 410H336V598H262ZM397 414H434V596H397ZM434 412H606L612 420V594L606 600H434ZM612 422H622V590H612Z" fill="url(#shaft)" />
        <path d="M622 421H718L724 428V584L718 590H622ZM726 422H738L743 430V582L738 590H726Z" fill="url(#shaft)" />
        <path d="M148 392V612M154 392V612M264 410V598M606 412V600M718 421V590" fill="none" />
        <path d="M380 266H396Q406 320 405 500Q406 700 396 744H378Z" fill="url(#blue2)" />
        <path d="M391 268Q394 500 389 743" fill="none" />
        <path d="M343 210L346 208H380L383 212L382 440L376 455V585L382 605L378 802H341L338 795L335 605L342 585L340 455L335 440L340 240Z" fill="url(#blue)" />
        <path d="M340 222H382M340 250H382M339 268H382M336 368H380M336 380H380M336 440H380M340 457H376M340 598H376M336 645H380M338 770H380M370 208Q374 500 370 800" fill="none" strokeWidth="2" />
        <rect x="448" y="352" width="152" height="60" rx="28" fill="#a4484e" />
        <rect x="449" y="367" width="151" height="46" rx="23" fill="#70343a" />
        <path d="M478 352V366M574 352V366" />
        <path d="M870 268H968L974 276V738L968 746H870L862 738V276Z" fill="url(#ring)" stroke="#151515" />
        <path d="M877 268V746M965 268V746" stroke="#222" fill="none" />
        <path d="M869 272V742" stroke="#bbb" strokeWidth="4" />
        <path d="M1076 397H1145V618H1076Z" fill="url(#dark)" stroke="#0a0a0a" />
        <BoltL x={172} y={244} len={106} h={40} />
        <BoltL x={166} y={257} len={106} />
        <BoltL x={179} y={383} len={102} />
        <BoltL x={161} y={416} len={102} />
        <BoltL x={161} y={629} len={105} />
        <BoltL x={172} y={744} len={101} h={44} />
        <BoltL x={166} y={765} len={106} />
      </g>

      <g transform="translate(880 410) scale(.3333)" stroke="#00190b" strokeWidth="2.500" strokeLinejoin="round">
        <path d="M268 47H455L477 65H288L290 230L262 175Q250 150 258 125L270 100Z" fill="#007238" />
        <path d="M260 960L290 900L282 1102L262 1060Z" fill="#006030" />
        <path d="M272 62L284 80L270 96L282 112L264 130L280 150M258 130Q250 150 262 170M268 975V1030M276 980V1080M262 1030L280 1040" fill="none" stroke="#021" strokeWidth="4" />
        <path d="M80 275H155L165 285H292V850L155 865H80Q70 700 70 570Q70 400 80 275Z" fill="url(#g2)" />
        <path d="M80 280Q92 290 90 570Q90 850 80 860Q70 700 70 570Q70 400 80 280Z" fill="#00b45a" />
        <path d="M82 275Q90 400 89 570Q90 750 82 865M76 300Q70 450 76 800M90 310H292M90 320H292M90 436H292M90 447H165M90 505H292M90 516H292M90 661H292M90 676H165M90 738H165M90 830H292M84 850H155" fill="none" />
        <path d="M148 275L280 150L292 170V240L165 292Z" fill="#00a352" />
        <path d="M155 310L285 188L292 200V288Z" fill="#005226" />
        <path d="M155 305L285 180" stroke="#00b55c" strokeWidth="6" />
        <path d="M155 310L290 188M155 310L190 290H292M165 275L282 165" fill="none" />
        <path d="M165 450L292 415V448L168 488Q174 470 165 450Z" fill="#00aa55" />
        <path d="M168 488L292 448V490Z" fill="#005a2c" />
        <path d="M165 685H292V748L178 697Z" fill="#00a04f" />
        <path d="M162 685L292 748V780L165 728Q174 710 162 685Z" fill="#008241" />
        <path d="M155 852H285L282 975Z" fill="#00a04f" />
        <path d="M155 852L165 853L282 968V985Z" fill="#003c1d" />
        <path d="M288 65H477L478 120L483 225L487 380L490 450V745L487 850L482 862L476 1000L470 1102H280L284 980L296 860V200Z" fill="url(#g1)" />
        <path d="M280 54H462M286 76Q298 300 296 570Q298 860 280 1100M288 115H478M288 120H478M290 136H478M292 226H483M292 236H484M292 253H485M296 380H487M296 446H490M296 450H490M297 472H490M297 745H490M297 758H490M297 768H488M296 850H486M296 857H482M284 1040H473M282 1060H472" fill="none" strokeWidth="2" />
        <path d="M290 310V448M290 505V661" stroke="#3bd187" />
        <path d="M497 325Q505 324 514 334H570L580 342V360H514L498 370Z" fill="url(#steel)" stroke="#111" />
        <path d="M540 342H620L625 348V370L620 377H540L535 370V348Z" fill="url(#pin)" stroke="#1c0d00" />
        <path d="M490 755H564L571 762V780L564 787H490Z" fill="url(#pin)" stroke="#1c0d00" />
        <path d="M563 756V786M545 342V377" stroke="#1c0d00" />
        <g stroke="#0a0a0a">
          <ellipse cx="644" cy="347" rx="10" ry="67" fill="#5a5a5a" />
          <ellipse cx="639" cy="347" rx="8" ry="66" fill="#3a3a3a" />
          <path d="M637 330V365" strokeWidth="8" />
          <path d="M750 272H790Q798 300 797 350Q797 400 792 422H750Q742 400 742 335H752V305L742 300Q744 280 750 272Z" fill="url(#washer)" />
          <path d="M742 335V400M752 275V420M748 335V400" fill="none" />
          <path d="M1100 275H1140Q1148 300 1147 350Q1147 400 1142 424H1100Q1090 400 1090 335H1102V305L1092 300Q1094 280 1100 275Z" fill="url(#washer)" />
          <path d="M1104 275Q1100 350 1104 424M1097 335V405" fill="none" />
          <path d="M905 234Q885 240 884 330Q882 420 892 428L912 430L916 234Z" fill="#303030" />
          <path d="M890 240L910 246L890 262L912 280L886 300L912 320L886 345L910 365L888 385L910 410" fill="none" strokeWidth="7" />
          <path d="M900 250V415" stroke="#777" strokeWidth="3" strokeDasharray="14 18" />
          <path d="M935 154Q910 200 906 572Q905 940 935 990L962 930V210Z" fill="#262626" />
          <path d="M940 185Q918 220 914 420H960V300Z" fill="#585858" />
          <path d="M935 225Q915 260 918 430L962 470V330Z" fill="#333" />
          <path d="M907 700Q912 900 932 958Q952 900 955 740L940 700Z" fill="#3c3c3c" />
          <path d="M914 720Q916 880 930 922Q944 900 936 720Z" fill="#8e8e8e" />
          <path d="M945 235Q930 320 945 425M955 220Q965 400 962 740M935 710Q944 820 945 905" fill="none" />
          {teeth.map(({ p, q, n, lit }, i) => (
            <g key={i}>
              <path d={`M${p.l} ${p.y}H${p.r}L${q.r} ${q.y}H${q.l}Z`} fill={`rgb(${lit} ${lit} ${lit})`} strokeWidth="2" />
              <path d={`M${q.l - 8} ${q.y}H${q.r - 4}L${n.r - 4} ${n.y}H${n.l - 8}Z`} fill={i < 15 ? "#1f1f1f" : "#3a3a3a"} strokeWidth="2" />
            </g>
          ))}
          <path d="M942 430Q968 470 966 572Q968 680 944 720Z" fill="#555" />
          <path d="M954 470Q962 560 952 650" fill="none" stroke="#999" strokeWidth="6" />
          <path d="M860 430H942Q954 572 942 716H860Z" fill="url(#hub)" />
          <ellipse cx="858" cy="572" rx="12" ry="142" fill="#4b4b4b" />
          <ellipse cx="857" cy="572" rx="8" ry="98" fill="#222" />
          <path d="M852 550H862V650L854 610Z" fill="#888" />
        </g>
      </g>

      <g transform="translate(1280 410) scale(.3333)" stroke="#0b0b0b" strokeWidth="2.500" strokeLinejoin="round">
        <path d="M95 353H180Q207 420 207 575Q207 740 180 796H92Q62 730 62 575Q62 400 95 353Z" fill="url(#ring)" />
        <path d="M182 354Q194 440 194 575Q194 720 182 795" fill="none" />
        <path d="M92 360Q116 420 116 575Q116 740 92 790Q62 730 62 575Q64 400 92 360Z" fill="#969696" />
        <path d="M88 378Q108 440 108 575Q108 720 88 775Q68 700 68 575Q70 420 88 378Z" fill="#555" />
        <path d="M84 395L96 410V455L72 470ZM72 690L96 690V725L84 765Z" fill="#8b8b8b" />
        <path d="M76 458H96Q102 500 102 575Q102 640 96 690H78Q66 640 66 575Q66 500 76 458Z" fill="#4c4c4c" />
        <ellipse cx="80" cy="573" rx="12" ry="98" fill="#a7a7a7" />
        <ellipse cx="79" cy="573" rx="8" ry="80" fill="#4a4a4a" />
        <path d="M282 515Q286 478 292 482Q303 490 303 575Q303 664 290 668Q280 668 281 545" fill="none" stroke="#2e2e00" strokeWidth="10" />
        <path d="M282 515Q286 478 292 482Q303 490 303 575Q303 664 290 668Q280 668 281 545" fill="none" stroke="#b5b000" strokeWidth="5" />

        <path d="M545 330Q605 360 605 575Q605 780 548 826L520 700V400Z" fill="url(#cy)" stroke="#02302e" />
        <path d="M560 340Q595 430 592 575Q590 760 556 818" fill="none" stroke="#054845" />
        <path d="M590 480Q606 560 590 690Z" fill="#06514f" stroke="#02302e" />
        <path d="M541 440L575 505V662L541 740Z" fill="#0a8a85" stroke="#02302e" />
        <path d="M541 662H570L541 725ZM541 455L572 502H541Z" fill="#10bcb5" stroke="#02302e" />
        <path d="M398 58L470 56L490 72L520 80L519 148L528 238L540 245L548 385V455L541 480V745L546 770L545 850L528 870L508 1040L502 1105H434L430 1088L400 1084L384 1058L380 950L366 870L355 680L352 500L340 440Q336 300 355 220L352 150L358 136H378L395 100Z" fill="url(#cy)" stroke="#02302e" />
        <path d="M398 58L420 60L448 78L455 170L468 240L478 400V740L468 860L442 960L434 1105L400 1084L384 1058L380 950L366 870L355 680L352 500L340 440Q336 300 355 220L352 150L358 136H378L395 100Z" fill="#0c9a94" stroke="#02302e" />
        <path d="M425 105Q470 220 474 570Q474 900 428 1010Q400 960 385 850L372 600L388 560L384 400L398 260L380 180L405 150Z" fill="url(#face)" stroke="#02302e" />
        <ellipse cx="366" cy="352" rx="20" ry="137" fill="url(#bore)" stroke="#02302e" />
        <ellipse cx="430" cy="575" rx="27" ry="221" fill="url(#bore)" stroke="#02302e" />
        <path d="M408 150Q402 100 418 98Q436 104 444 160M384 230L398 260V340L386 380V570H374L366 500L354 510M380 190L370 160L384 150L400 135M352 560L375 680L382 860L390 950L410 1050L425 1040" fill="none" stroke="#033" strokeWidth="6" />
        <path d="M360 540L378 690L376 850M395 960L408 1030L424 1050" fill="none" stroke="#20d6cf" strokeWidth="6" />
        <path d="M448 76Q452 160 455 180L470 240M468 240H540M476 260H541M452 118H519M452 142H519M484 390H548M482 456H546M480 480H541M476 752H545M480 770H546M472 862H545M466 870H528M440 1048H508M438 1062H506M480 480V745" fill="none" stroke="#02302e" strokeWidth="2" />
        <path d="M456 150L470 165V190ZM470 280V330M474 345V380M470 780V830M362 700V760M368 830V870M344 390V430M404 70L412 90L400 110M436 1000L428 1040" fill="none" stroke="#02302e" strokeWidth="6" />
      </g>

      <g transform="translate(1450 410) scale(.3333)" stroke="#001c00" strokeWidth="2.500" strokeLinejoin="round">
        <path d="M33 92L40 90H160V82L170 75H190L195 84V110H80V124H40L33 118Z" fill="url(#steel)" stroke="#111" />
        <path d="M44 90V124M168 78V96H195" fill="none" stroke="#111" strokeWidth="2" />
        <BoltR x={82} y={127} head={212} h={66} />
        <path d="M150 270L160 267H240L250 285V302H150Q140 285 150 270Z" fill="#a4484e" stroke="#220a0a" />
        <path d="M155 281H240L250 290V304H148Z" fill="#70343a" stroke="#220a0a" />
        <path d="M140 304H335V405H140Q128 395 128 350Q128 315 140 304Z" fill="url(#limeShaft)" />
        <path d="M142 305Q154 350 144 404M133 325Q142 350 133 385Q128 350 133 325" fill="none" />
        <path d="M425 163H725Q745 165 752 185L764 420Q766 450 752 480L716 545H425Z" fill="url(#lime)" />
        <path d="M435 466H735L752 465Q740 530 692 548H425Z" fill="#006a00" />
        <path d="M428 185H750M725 164L735 300L740 422L735 466M752 185L757 300M438 422H763M430 163L425 180M442 260H650M442 272H640V328M442 332H650L630 302L650 262V344H442M650 302H757M430 497H635L620 523L612 512L635 500M430 525H612M635 512H725M738 466Q735 520 705 546" fill="none" />
        <path d="M445 274H630V330H445Z" fill="url(#limeShaft)" />
        <path d="M435 422H740V464H435Z" fill="url(#limeShaft)" />
        <path d="M348 138H405L442 252V320L420 572H357L330 490L325 300Z" fill="#00a300" />
        <path d="M385 250H442V320L420 572H357L368 520Z" fill="#007d00" />
        <path d="M348 140L384 250V318L360 570M384 250H441M384 318H441M367 542H424" fill="none" />
        <path d="M384 250H441V318H384Z" fill="#009200" />
        <path d="M342 172L350 185L342 205ZM355 500L364 525L356 535ZM374 290V312" fill="#003800" />
        <path d="M340 220Q385 230 380 370Q375 480 340 491Q316 450 316 350Q318 250 340 220Z" fill="#008e00" />
        <path d="M335 222Q362 260 360 360Q358 460 335 489Q316 440 316 350Q318 260 335 222Z" fill="#00a200" />
        <ellipse cx="332" cy="352" rx="15" ry="56" fill="#008500" />
        <BoltR x={113} y={416} head={247} />
        <BoltR x={106} y={805} head={240} />
        <BoltR x={22} y={1012} head={148} h={62} />
        <BoltR x={70} y={1051} head={198} h={70} />
        <BoltR x={78} y={727} head={115} h={70} end={false} />
        <BoltR x={772} y={191} head={962} h={72} />
        <BoltR x={874} y={300} head={1003} h={72} />
        <BoltR x={762} y={413} head={940} h={72} end={false} />
        <BoltR x={854} y={523} head={980} h={72} />
      </g>

      <g transform="translate(0 780) scale(.3333)">
        <path d="M1239 510V560" stroke="#14606e" strokeWidth="6" />
        <circle cx="1240" cy="507" r="11" fill="#3565b5" />
        <path d="M1130 559H1235" stroke="#6cc06c" strokeWidth="8" />
        <path d="M1092 559L1132 549V569Z" fill="#4c9a50" />
        <path d="M1236 560L1238 645" stroke="#b83038" strokeWidth="9" />
        <path d="M1228 642H1247L1239 684Z" fill="#b02c36" />
        <circle cx="1235" cy="559" r="18" fill="#b5b03c" />
        <circle cx="1234" cy="556" r="8" fill="#d0cc80" />
      </g>
      <g fontFamily="'Noto Sans', sans-serif" fontSize="12" fontWeight="600" textAnchor="middle">
        <text x="356" y="971" fill="#23701f">Y</text>
        <text x="414" y="943" fill="#27407f">Z</text>
        <text x="413" y="1018" fill="#8e2323">X</text>
      </g>
    </svg>
  );
}

function Viewport() {
  return (
    <main className="relative grow overflow-hidden bg-linear-to-b from-[#4e4e4e] via-[#404040] to-[#333]">
      <Model />
      <ViewToolbar />
      <button aria-label="Режим детали" className="absolute right-[25px] top-[31px] flex h-12 w-[50px] items-center justify-center bg-black">
        <svg viewBox="0 0 40 40" className="size-10" aria-hidden="true">
          <g fill="none" stroke="#3f7df5" strokeWidth="2">
            <path d="M1 10L5 6H12V21L18 20L23 23V27H35V32L31 37H1Z" />
            <path d="M1 10H6V27M6 37L8 33H31L35 28" />
            <path d="M24 6L28 2H35L40 7V12L36 16H24Z" />
            <circle cx="31" cy="9" r="3" />
            <circle cx="9" cy="31" r="3.500" />
          </g>
          <path d="M7 8H12V22L18 20L23 24L21 28H13Q10 25 7 27Z" fill="#3f7df5" />
          <path d="M36 3L40 7V12L37 15V6Z" fill="#3f7df5" />
        </svg>
      </button>
    </main>
  );
}

export default function App() {
  return (
    <div className="flex h-screen flex-col overflow-hidden bg-[#1d1d1d] font-['Noto_Sans',sans-serif]">
      <div className="flex min-h-0 grow">
        <div className="flex min-w-0 grow flex-col">
          <TitleBar />
          <TabRow />
          <Ribbon />
          <div className="flex min-h-0 grow">
            <SideStrip />
            <TreePanel />
            <Viewport />
          </div>
        </div>
        <div className="flex w-2 shrink-0 flex-col bg-[#404040]">
          <div className="flex h-[23px] justify-end bg-[#333] pt-[3px]"><div className="h-3.5 w-1 border border-r-0 border-[#d33] bg-[#eee]" /></div>
          <div className="h-[21px] border-b border-black" />
          <div className="h-9 border-b border-black" />
          <div className="mt-[518px] h-2.5 w-0.5 self-end bg-[#ddd]" />
        </div>
      </div>
      <footer className="flex h-2 shrink-0 justify-end overflow-hidden bg-[#1d1d1d] pr-3">
        <div className="w-40 bg-[#2b2b2b]" />
        <div className="flex w-[691px] items-start justify-end pr-[60px] pt-1">
          <time className="text-[11px] leading-3 text-white">18:23:28</time>
        </div>
        <div className="w-px bg-[#777]" />
      </footer>
    </div>
  );
}
